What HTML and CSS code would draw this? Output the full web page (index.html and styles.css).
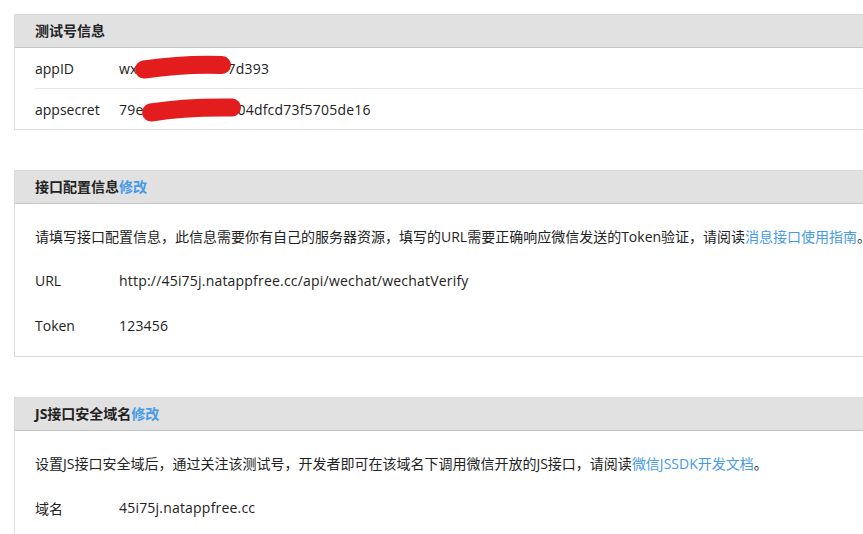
FILE: index.html
```html
<!DOCTYPE html>
<html lang="zh-CN">
<head>
<meta charset="utf-8">
<title>测试号管理</title>
<link rel="stylesheet" href="styles.css">
</head>
<body>
<div class="page">
  <section class="panel">
    <div class="panel-head">测试号信息</div>
    <div class="panel-body">
      <div class="kv kv-line">
        <span class="label">appID</span>
        <span class="value">wx<span class="redact r1"><svg width="110" height="24" viewBox="0 0 110 24"><path d="M6 11.5 C 30 8, 58 6, 84 7" /></svg></span>7d393</span>
      </div>
      <div class="kv kv-line">
        <span class="label">appsecret</span>
        <span class="value">79e<span class="redact r2"><svg width="110" height="24" viewBox="0 0 110 24"><path d="M8 13.5 C 35 9, 60 8, 89 8.5" /></svg></span>04dfcd73f5705de16</span>
      </div>
    </div>
  </section>

  <section class="panel">
    <div class="panel-head">接口配置信息<a class="link" href="#">修改</a></div>
    <div class="panel-body padded">
      <div class="kv">请填写接口配置信息，此信息需要你有自己的服务器资源，填写的URL需要正确响应微信发送的Token验证，请阅读<a class="link" href="#">消息接口使用指南</a>。</div>
      <div class="kv"><span class="label">URL</span><span class="value">http://45i75j.natappfree.cc/api/wechat/wechatVerify</span></div>
      <div class="kv"><span class="label">Token</span><span class="value">123456</span></div>
    </div>
  </section>

  <section class="panel">
    <div class="panel-head">JS接口安全域名<a class="link" href="#">修改</a></div>
    <div class="panel-body padded">
      <div class="kv">设置JS接口安全域后，通过关注该测试号，开发者即可在该域名下调用微信开放的JS接口，请阅读<a class="link" href="#">微信JSSDK开发文档</a>。</div>
      <div class="kv"><span class="label">域名</span><span class="value">45i75j.natappfree.cc</span></div>
    </div>
  </section>
</div>
</body>
</html>
```

FILE: styles.css
```css
html, body {
  margin: 0;
  padding: 0;
  background: #fff;
  overflow: hidden;
}

body {
  font-family: "Open Sans", "Noto Sans CJK SC", sans-serif;
  font-size: 14px;
  color: #222;
}

.page {
  padding: 14px 0 0 14px;
}

.panel {
  width: 900px;
  border: 1px solid #dcdcdc;
  border-right: none;
  margin-bottom: 40px;
  background: #fff;
}

.panel-head {
  height: 32px;
  line-height: 32px;
  padding-left: 20px;
  background: #e1e1e1;
  border-bottom: 1px solid #c6c6c6;
  font-weight: bold;
  white-space: nowrap;
}

.link {
  color: #459ae9;
  text-decoration: none;
  font-weight: normal;
}

.panel-head .link {
  font-weight: bold;
}

.panel-body {
  padding: 0 0 0 20px;
}

.panel-body.padded {
  padding-top: 9px;
  padding-bottom: 8px;
}

.kv {
  display: flex;
  align-items: center;
  height: 45px;
  white-space: nowrap;
}

.kv-line {
  height: 40px;
  border-bottom: 1px solid #e6e6e6;
}

.kv-line:last-child {
  border-bottom: none;
}

.label {
  width: 84px;
  flex: none;
}

.value {
  display: flex;
  align-items: center;
  letter-spacing: 0.2px;
}

.redact {
  position: relative;
  display: inline-block;
  height: 20px;
}

.redact.r1 {
  width: 90px;
}

.redact.r2 {
  width: 94px;
}

.redact svg {
  position: absolute;
  left: 0;
  top: 0;
  overflow: visible;
}

.redact path {
  fill: none;
  stroke: #e31c1e;
  stroke-width: 18;
  stroke-linecap: round;
}
```
